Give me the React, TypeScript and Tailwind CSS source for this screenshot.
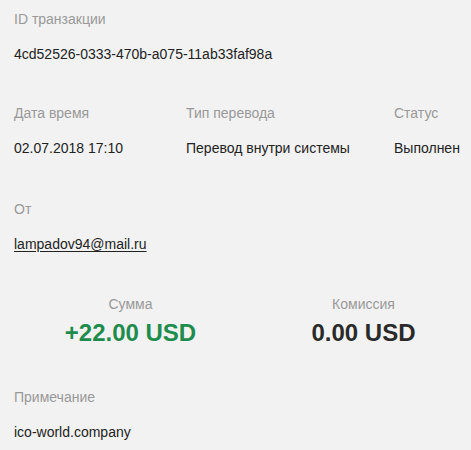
export default function App() {
  const label = 'text-[14px] leading-5 text-[#999999]';
  const value = 'text-[14px] leading-5 text-[#222222]';

  return (
    <div className="min-h-[450px] w-full overflow-hidden bg-[#f2f2f2] pl-[14px] pt-[9px] font-['Liberation_Sans',Arial,sans-serif]">
      {/* Transaction ID */}
      <div>
        <div className={label}>ID транзакции</div>
        <div className={`${value} mt-[15px]`}>4cd52526-0333-470b-a075-11ab33faf98a</div>
      </div>

      {/* Date / type / status */}
      <div className="mt-[39px] flex">
        <div className="w-[172px]">
          <div className={label}>Дата время</div>
          <div className={`${value} mt-[15px]`}>02.07.2018 17:10</div>
        </div>
        <div className="w-[208px]">
          <div className={label}>Тип перевода</div>
          <div className={`${value} mt-[15px]`}>Перевод внутри системы</div>
        </div>
        <div>
          <div className={label}>Статус</div>
          <div className={`${value} mt-[15px]`}>Выполнен</div>
        </div>
      </div>

      {/* From */}
      <div className="mt-[41px]">
        <div className={label}>От</div>
        <div className={`${value} mt-[15px]`}>
          <a href="#" className="underline underline-offset-2">lampadov94@mail.ru</a>
        </div>
      </div>

      {/* Amounts */}
      <div className="mt-10 flex">
        <div className="w-[233px] shrink-0 text-center">
          <div className={label}>Сумма</div>
          <div className="mt-[5px] text-[24px] font-bold leading-7 text-[#1e8c4c]">+22.00 USD</div>
        </div>
        <div className="w-[233px] shrink-0 text-center">
          <div className={label}>Комиссия</div>
          <div className="mt-[5px] text-[24px] font-bold leading-7 text-[#2a2a2a]">0.00 USD</div>
        </div>
      </div>

      {/* Note */}
      <div className="mt-10">
        <div className={label}>Примечание</div>
        <div className={`${value} mt-[15px]`}>ico-world.company</div>
      </div>
    </div>
  );
}
